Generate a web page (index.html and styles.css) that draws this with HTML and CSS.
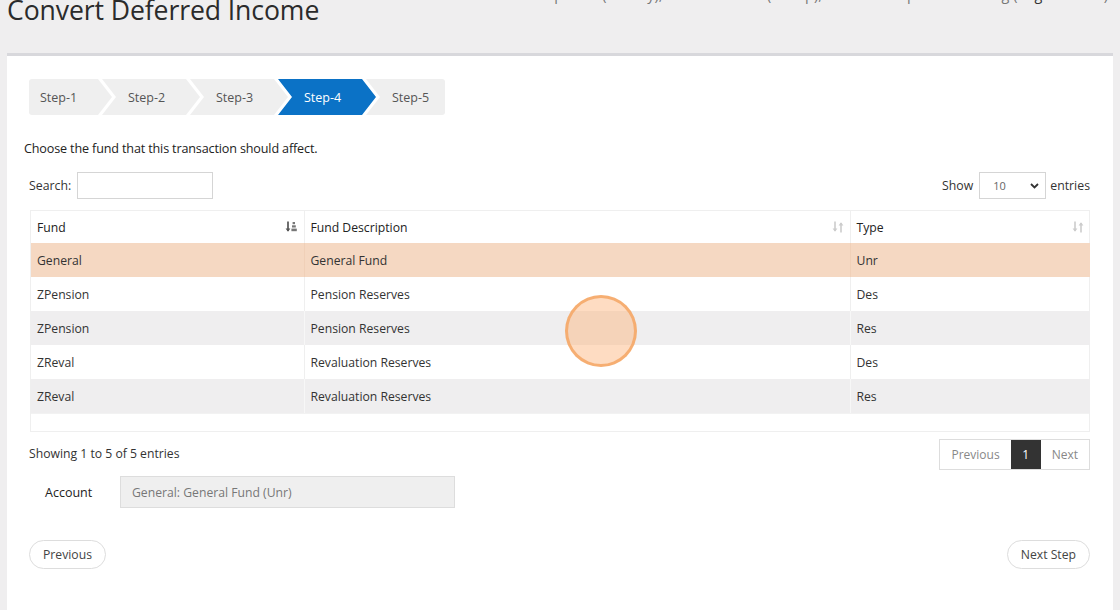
FILE: index.html
```html
<!DOCTYPE html>
<html>
<head>
<meta charset="utf-8">
<link rel="stylesheet" href="styles.css">
</head>
<body>
<header class="top">
  <h1 class="title">Convert Deferred Income</h1>
  <div class="context">Data Development (Brandy), Parent of Data (Group), Data Development Training (<span class="org">Organization</span>)</div>
</header>
<main class="panel">
  <nav class="steps">
    <div class="step first">Step-1</div>
    <div class="step">Step-2</div>
    <div class="step">Step-3</div>
    <div class="step active">Step-4</div>
    <div class="step last">Step-5</div>
  </nav>
  <p class="prompt">Choose the fund that this transaction should affect.</p>
  <div class="toolbar">
    <label class="search">Search: <input type="text" class="search-input"></label>
    <label class="length">Show
      <span class="select"><span class="select-val">10</span>
        <svg class="chev" width="9" height="6" viewBox="0 0 9 6"><path d="M1 1 L4.5 4.5 L8 1" fill="none" stroke="#333" stroke-width="1.8"/></svg>
      </span>
      entries</label>
  </div>
  <div class="table-wrap">
    <table class="grid">
      <colgroup><col class="c1"><col class="c2"><col class="c3"></colgroup>
      <thead>
        <tr>
          <th><span>Fund</span>
            <svg class="sort on" width="13" height="12" viewBox="0 0 13 12"><path d="M3 0.5 V10" stroke="#555" stroke-width="1.7"/><path d="M0.6 7.5 L3 10.8 L5.4 7.5 Z" fill="#555"/><rect x="7.6" y="1" width="2.4" height="2.2" fill="#777"/><rect x="7" y="4.3" width="3.8" height="2.2" fill="#777"/><rect x="6.4" y="7.6" width="5.4" height="2.6" fill="#777"/></svg>
          </th>
          <th><span>Fund Description</span>
            <svg class="sort" width="12" height="12" viewBox="0 0 12 12"><path d="M3 0.5 V10" stroke="#ccc" stroke-width="1.6"/><path d="M0.6 7.5 L3 10.8 L5.4 7.5 Z" fill="#ccc"/><path d="M9 11.5 V2" stroke="#ccc" stroke-width="1.6"/><path d="M6.6 4.5 L9 1.2 L11.4 4.5 Z" fill="#ccc"/></svg>
          </th>
          <th><span>Type</span>
            <svg class="sort" width="12" height="12" viewBox="0 0 12 12"><path d="M3 0.5 V10" stroke="#ccc" stroke-width="1.6"/><path d="M0.6 7.5 L3 10.8 L5.4 7.5 Z" fill="#ccc"/><path d="M9 11.5 V2" stroke="#ccc" stroke-width="1.6"/><path d="M6.6 4.5 L9 1.2 L11.4 4.5 Z" fill="#ccc"/></svg>
          </th>
        </tr>
      </thead>
      <tbody>
        <tr class="selected"><td>General</td><td>General Fund</td><td>Unr</td></tr>
        <tr><td>ZPension</td><td>Pension Reserves</td><td>Des</td></tr>
        <tr class="alt"><td>ZPension</td><td>Pension Reserves</td><td>Res</td></tr>
        <tr><td>ZReval</td><td>Revaluation Reserves</td><td>Des</td></tr>
        <tr class="alt"><td>ZReval</td><td>Revaluation Reserves</td><td>Res</td></tr>
      </tbody>
    </table>
    <div class="table-foot"></div>
  </div>
  <div class="info-row">
    <div class="info">Showing 1 to 5 of 5 entries</div>
    <div class="pager">
      <span class="pg">Previous</span><span class="pg current">1</span><span class="pg">Next</span>
    </div>
  </div>
  <div class="account-row">
    <span class="account-label">Account</span>
    <div class="account-field">General: General Fund (Unr)</div>
  </div>
  <div class="actions">
    <button class="pill">Previous</button>
    <button class="pill">Next Step</button>
  </div>
  <div class="click-dot"></div>
</main>
</body>
</html>
```
FILE: styles.css
```css
* { box-sizing: border-box; }
html, body { margin: 0; padding: 0; }
body {
  background: #efeeef;
  font-family: "Open Sans", "Noto Sans", sans-serif;
  color: #333;
  width: 1120px;
  height: 610px;
  overflow: hidden;
  font-size: 12px;
}
.top {
  height: 53px;
  display: flex;
  justify-content: space-between;
  align-items: flex-start;
  padding: 0 12px 0 7px;
}
.title {
  margin: -8px 0 0 0;
  font-size: 26.6px;
  font-weight: 400;
  line-height: 36px;
  color: #2b2b2b;
  letter-spacing: -0.1px;
}
.context {
  margin-top: -14px;
  font-size: 14.4px;
  line-height: 18px;
  color: #777;
  white-space: nowrap;
}
.context .org { color: #333; }
.panel {
  position: relative;
  margin-left: 7px;
  width: 1106px;
  height: 600px;
  background: #fff;
  border-top: 3px solid #d8d8dc;
  padding: 23px 23px 0 22px;
}
.steps {
  display: flex;
  height: 36px;
}
.step {
  height: 36px;
  width: 98px;
  margin-left: -10px;
  background: #efefef;
  color: #555;
  font-size: 12.5px;
  line-height: 37px;
  padding-left: 26px;
  clip-path: polygon(0 0, calc(100% - 14px) 0, 100% 50%, calc(100% - 14px) 100%, 0 100%, 14px 50%);
}
.step.first {
  margin-left: 0;
  width: 83px;
  padding-left: 11px;
  border-radius: 3px 0 0 3px;
  clip-path: polygon(0 0, calc(100% - 14px) 0, 100% 50%, calc(100% - 14px) 100%, 0 100%);
}
.step.last {
  width: 79px;
  border-radius: 0 3px 3px 0;
  clip-path: polygon(0 0, 100% 0, 100% 100%, 0 100%, 14px 50%);
}
.step.active {
  background: #0b72c6;
  color: #fff;
}
.prompt {
  margin: 26px 0 0 -5px;
  font-size: 12.6px;
  line-height: 16px;
  color: #222;
  letter-spacing: -0.15px;
}
.toolbar {
  margin-top: 15px;
  display: flex;
  justify-content: space-between;
  align-items: center;
  height: 27px;
}
.search, .length {
  display: flex;
  align-items: center;
  font-size: 12.3px;
  color: #333;
}
.search-input {
  margin-left: 6px;
  width: 136px;
  height: 27px;
  border: 1px solid #d5d5d5;
  padding: 0 4px;
  font: inherit;
}
.select {
  margin: 0 4px 0 6px;
  width: 67px;
  height: 27px;
  border: 1px solid #d5d5d5;
  display: flex;
  align-items: center;
  justify-content: space-between;
  padding: 0 6px 0 13px;
  font-size: 11px;
  color: #666;
}
.table-wrap {
  margin-top: 11px;
  margin-left: 1px;
  width: 1060px;
  border: 1px solid #efefef;
  border-bottom: none;
}
.grid {
  width: 100%;
  border-collapse: collapse;
  table-layout: fixed;
}
.c1 { width: 273px; }
.c2 { width: 546px; }
.c3 { width: 240px; }
.grid th {
  height: 32px;
  text-align: left;
  font-weight: 400;
  font-size: 12.2px;
  color: #222;
  padding: 0 6px;
  border-right: 1px solid #efefef;
  position: relative;
}
.grid th:last-child, .grid td:last-child { border-right: none; }
.grid th .sort {
  position: absolute;
  right: 6px;
  top: 10px;
}
.grid td {
  height: 34px;
  padding: 0 6px;
  font-size: 12.2px;
  color: #333;
  border-right: 1px solid #efefef;
}
.grid tr.selected td { background: #f5d8c2; border-right-color: #f0d0b8; }
.grid tr.alt td { background: #efeeef; border-right-color: #f7f7f7; }
.table-foot {
  height: 19px;
  border-top: 1px solid #f2f2f2;
  border-bottom: 1px solid #efefef;
}
.info-row {
  margin-top: 7px;
  display: flex;
  justify-content: space-between;
  align-items: center;
  height: 31px;
}
.info { font-size: 12.2px; color: #333; margin-top: -2px; }
.pager {
  display: flex;
  height: 31px;
  border: 1px solid #ddd;
}
.pg {
  display: flex;
  align-items: center;
  justify-content: center;
  font-size: 12px;
  color: #888;
  padding: 0 11px;
}
.pg.current {
  background: #333;
  color: #fff;
  width: 30px;
  padding: 0;
}
.account-row {
  margin-top: 6px;
  display: flex;
  align-items: center;
  padding-left: 16px;
}
.account-label {
  width: 75px;
  font-size: 12.5px;
  color: #222;
}
.account-field {
  width: 335px;
  height: 32px;
  background: #efefef;
  border: 1px solid #ddd;
  display: flex;
  align-items: center;
  padding-left: 11px;
  font-size: 12.2px;
  color: #777;
}
.actions {
  margin-top: 32px;
  display: flex;
  justify-content: space-between;
}
.pill {
  height: 29px;
  padding: 0 13px;
  border: 1px solid #ddd;
  border-radius: 15px;
  background: #fff;
  font-family: inherit;
  font-size: 12.2px;
  color: #444;
}
.click-dot {
  position: absolute;
  left: 558px;
  top: 239px;
  width: 72px;
  height: 72px;
  border-radius: 50%;
  background: rgba(253, 178, 120, 0.45);
  border: 3px solid rgba(244, 166, 100, 0.85);
}
```
